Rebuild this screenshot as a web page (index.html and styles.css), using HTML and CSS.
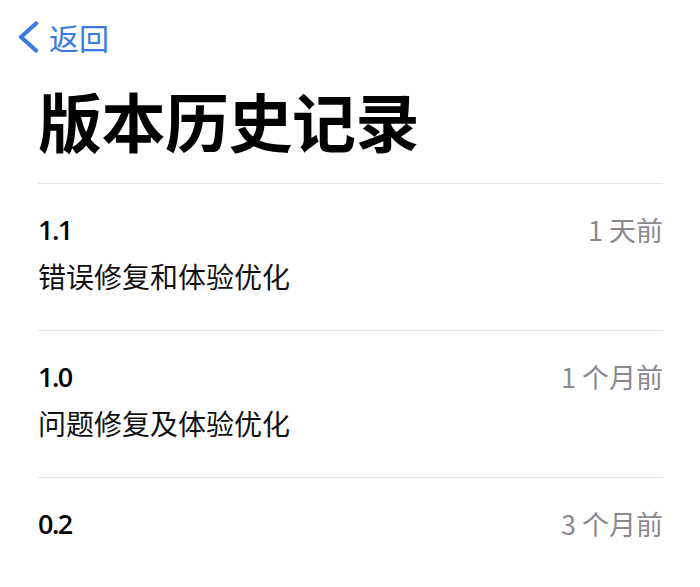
FILE: index.html
```html
<!DOCTYPE html>
<html lang="zh-CN">
<head>
  <meta charset="UTF-8">
  <meta name="viewport" content="width=device-width, initial-scale=1">
  <title>版本历史记录</title>
  <link rel="stylesheet" href="styles.css">
</head>
<body>

<nav class="nav">
  <a class="back" href="#">
    <svg class="back-icon" viewBox="0 0 22 32" width="22" height="32" aria-hidden="true">
      <path d="M19 2.5 L4 16 L19 29.5" fill="none" stroke="currentColor" stroke-width="4.2" stroke-linecap="round" stroke-linejoin="round"/>
    </svg>
    <span>返回</span>
  </a>
</nav>

<main>
  <h1 class="title">版本历史记录</h1>

  <ul class="versions">
    <li class="version">
      <div class="version-head">
        <span class="version-num">1.1</span>
        <span class="version-date">1 天前</span>
      </div>
      <p class="version-notes">错误修复和体验优化</p>
    </li>
    <li class="version">
      <div class="version-head">
        <span class="version-num">1.0</span>
        <span class="version-date">1 个月前</span>
      </div>
      <p class="version-notes">问题修复及体验优化</p>
    </li>
    <li class="version">
      <div class="version-head">
        <span class="version-num">0.2</span>
        <span class="version-date">3 个月前</span>
      </div>
    </li>
  </ul>
</main>

</body>
</html>
```

FILE: styles.css
```css
/* Reset */
* {
  margin: 0;
  padding: 0;
  box-sizing: border-box;
}

body {
  font-family: "Noto Sans CJK SC", "Noto Sans", sans-serif;
  background-color: #fff;
  color: #000;
  padding: 0 37px 0 38px;
  overflow: hidden;
}

/* Top navigation */
.nav {
  height: 74px;
  display: flex;
  align-items: center;
  margin-left: -21px;
}

.back {
  display: flex;
  align-items: center;
  gap: 10px;
  color: #3a7be2;
  text-decoration: none;
  font-size: 30px;
  line-height: 36px;
}

.back-icon {
  display: block;
}

/* Title */
.title {
  margin-top: 5px;
  margin-bottom: 24px;
  font-size: 64px;
  line-height: 80px;
  font-weight: 700;
  letter-spacing: -0.5px;
}

/* Version list */
.versions {
  list-style: none;
}

.version {
  border-top: 1px solid #e2e2e2;
  padding: 28px 0 36px;
}

.version-head {
  display: flex;
  justify-content: space-between;
  align-items: center;
  line-height: 36px;
}

.version-num {
  font-family: "Open Sans", "Noto Sans", sans-serif;
  font-size: 27px;
  font-weight: 600;
  letter-spacing: -1.5px;
}

.version-date {
  font-size: 27px;
  color: #8a8a8e;
}

.version-notes {
  margin-top: 10px;
  font-size: 28px;
  line-height: 36px;
  color: #111;
}
```
